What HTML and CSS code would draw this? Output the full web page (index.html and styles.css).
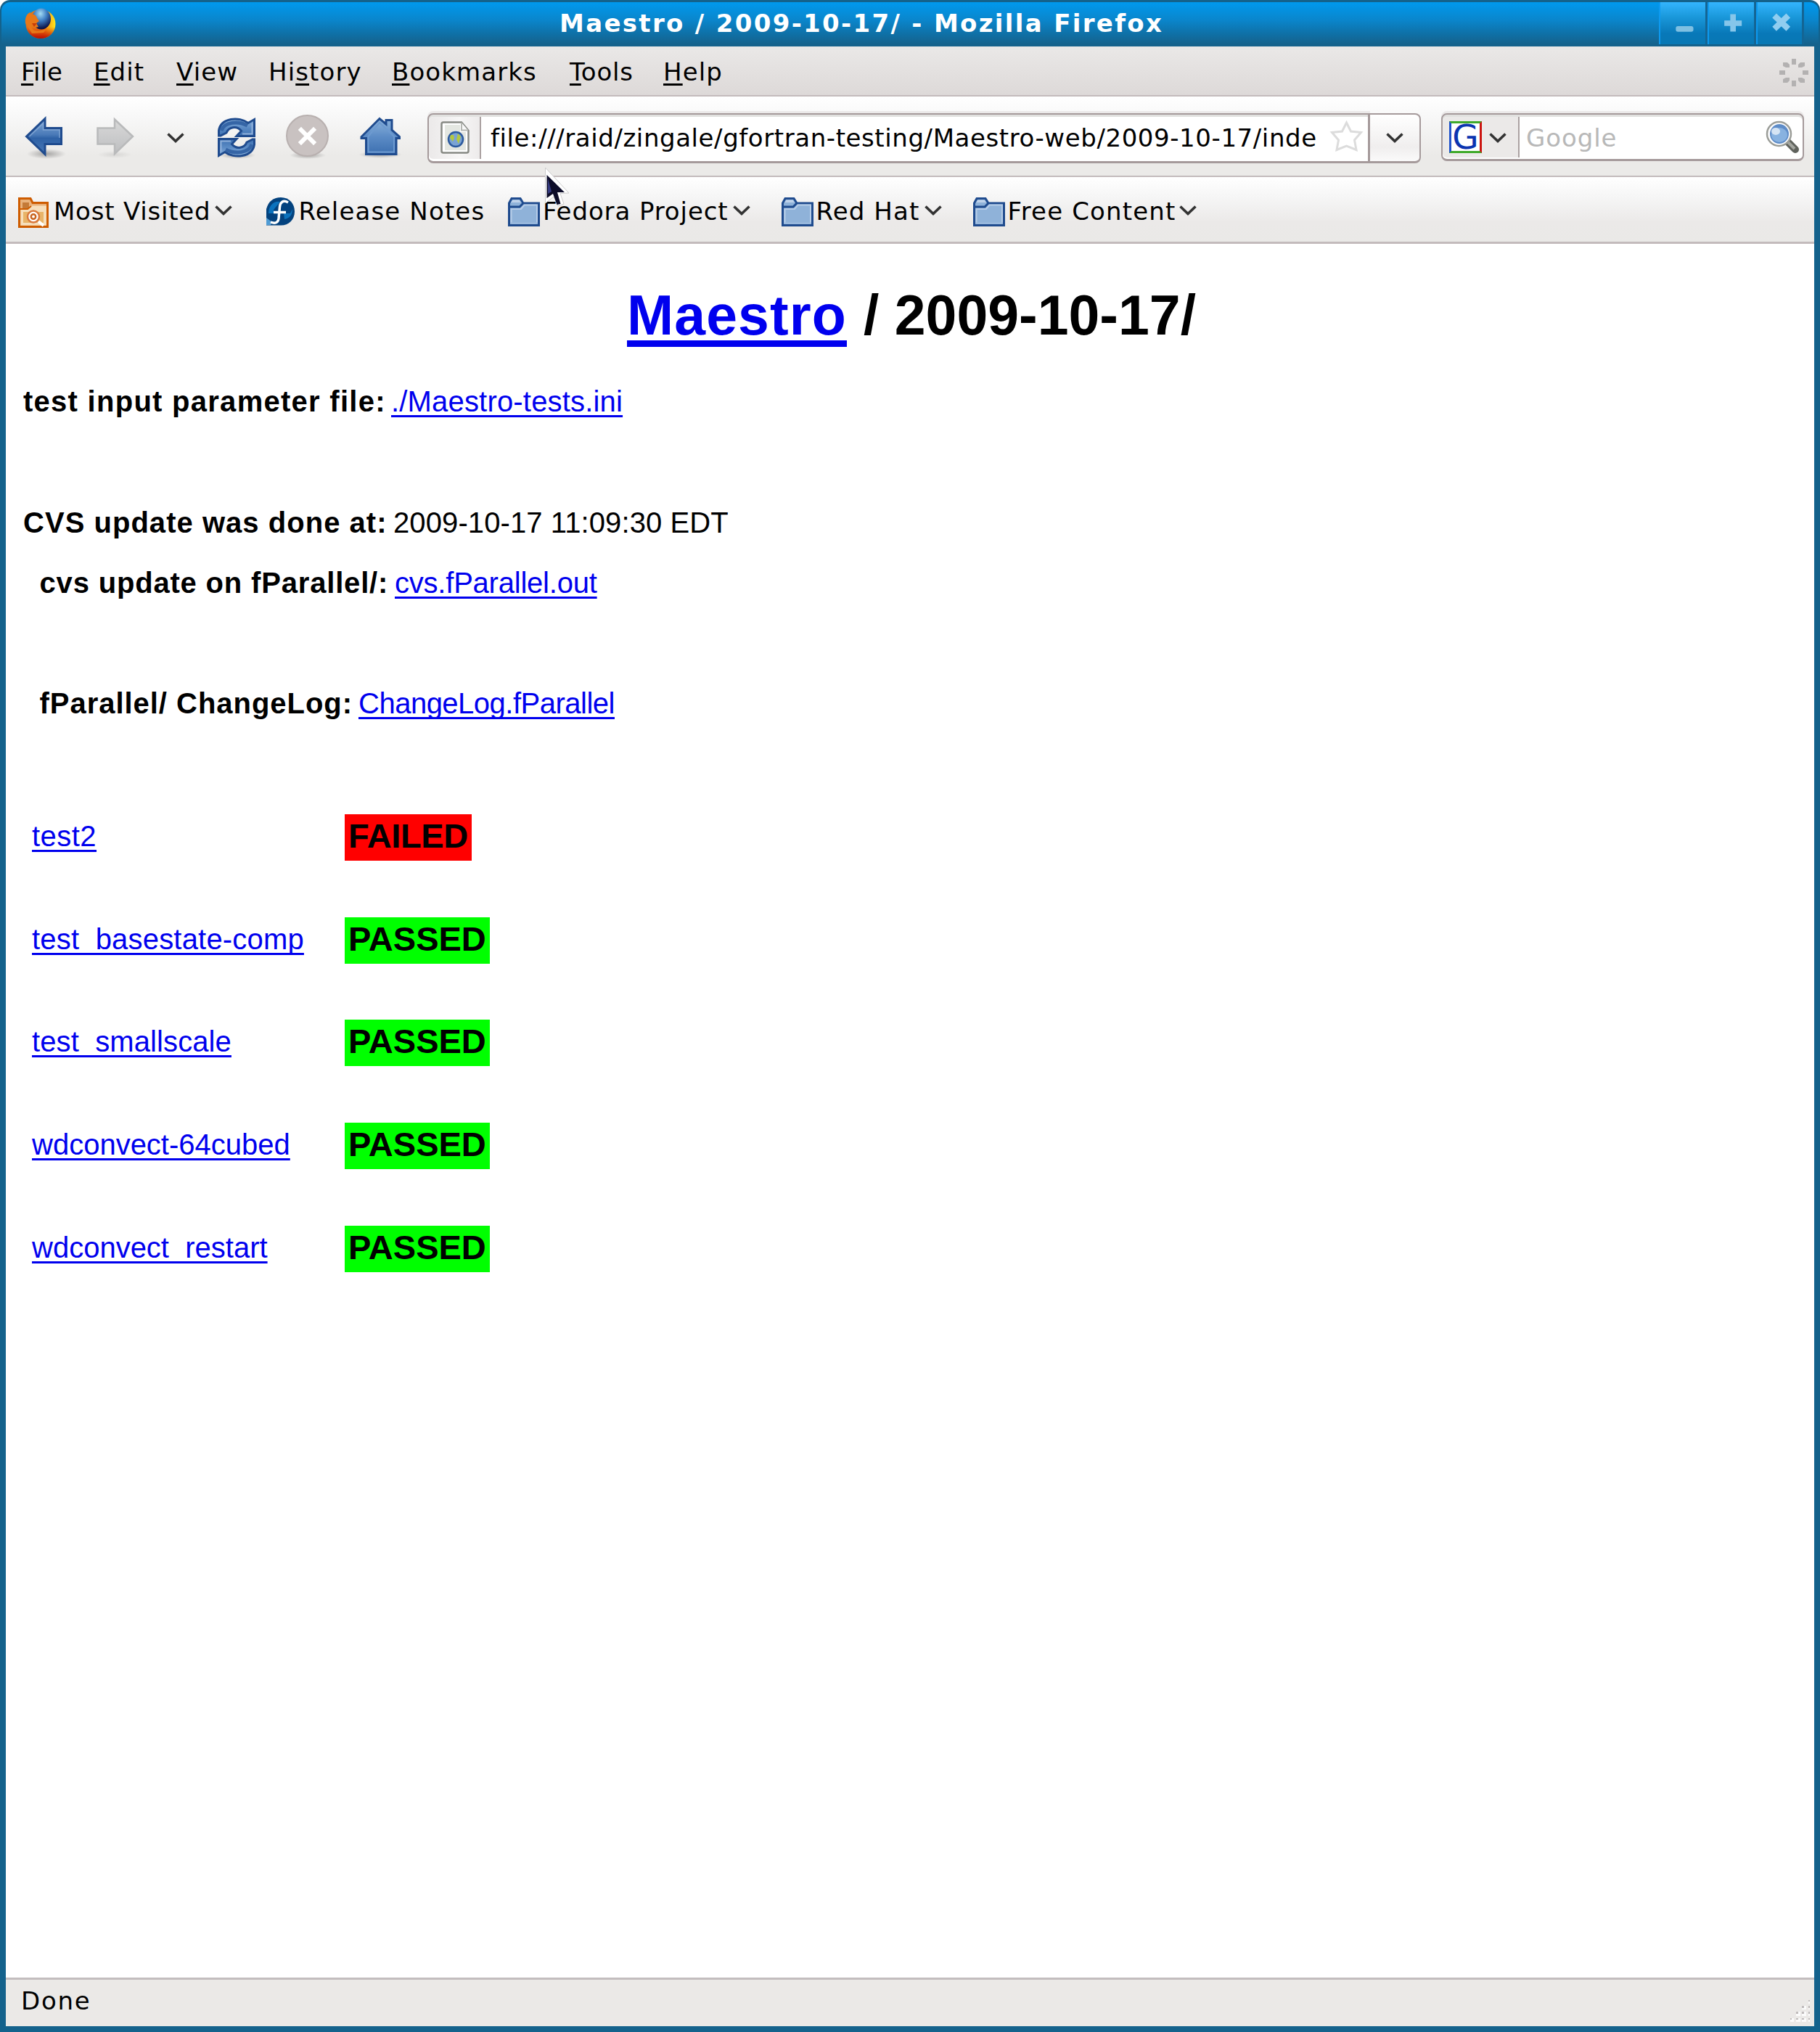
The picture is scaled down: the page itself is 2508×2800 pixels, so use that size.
FILE: index.html
```html
<!DOCTYPE html>
<html lang="en">
<head>
<meta charset="utf-8">
<title>Maestro / 2009-10-17/</title>
<link rel="stylesheet" href="styles.css">
</head>
<body>
<svg class="defs" width="0" height="0" aria-hidden="true">
  <defs>
    <linearGradient id="blue" x1="0" y1="0" x2="0" y2="1"><stop offset="0" stop-color="#8db4dc"/><stop offset=".5" stop-color="#5c8cc6"/><stop offset="1" stop-color="#3c6fb0"/></linearGradient>
    <linearGradient id="arrow" x1="0" y1="0" x2="0" y2="1"><stop offset="0" stop-color="#7ea6d4"/><stop offset=".45" stop-color="#4a7ab8"/><stop offset=".55" stop-color="#2f62a6"/><stop offset="1" stop-color="#4a78b6"/></linearGradient>
    <linearGradient id="grey" x1="0" y1="0" x2="0" y2="1"><stop offset="0" stop-color="#d9d9d9"/><stop offset="1" stop-color="#bdbec0"/></linearGradient>
    <radialGradient id="shadow"><stop offset="0" stop-color="#000" stop-opacity=".3"/><stop offset="1" stop-color="#000" stop-opacity="0"/></radialGradient>
    <radialGradient id="globe" cx=".45" cy=".25" r=".75"><stop offset="0" stop-color="#a4dcf4"/><stop offset=".45" stop-color="#3f7fc4"/><stop offset="1" stop-color="#05083c"/></radialGradient>
    <linearGradient id="fox" x1="0" y1="0" x2="1" y2="0"><stop offset="0" stop-color="#e0701a"/><stop offset=".6" stop-color="#f08010"/><stop offset="1" stop-color="#ffe81c"/></linearGradient>
    <linearGradient id="foxbase" x1="0" y1="0" x2="0" y2="1"><stop offset=".6" stop-color="#d01000" stop-opacity="0"/><stop offset="1" stop-color="#b80c00"/></linearGradient>
    <symbol id="folder" viewBox="0 0 44 40">
      <path d="M1.500 38.500V8L5 1.500H17L21 8H42.500V38.500Z" fill="#8fb2d9" stroke="#1f4b8e" stroke-width="3"/>
      <path d="M4 7 6.500 3.500H15.500L18 7Z" fill="#bfd2ea"/>
      <path d="M2 13H16L20.500 8.500" fill="none" stroke="#1f4b8e" stroke-width="3"/>
      <path d="M4.500 36V16H18L22.500 10.500H40V36" fill="none" stroke="#b7cde8" stroke-width="2"/>
      <path d="M3 35.500H41" stroke="#9bbade" stroke-width="2"/>
    </symbol>
    <symbol id="chev" viewBox="0 0 24 15"><path d="M1.500 1.500 12 11.500 22.500 1.500" fill="none" stroke="#333" stroke-width="3.600"/></symbol>
  </defs>
</svg>

<div class="window">
  <header class="titlebar">
    <svg class="app-icon" viewBox="33 10 44 44">
      <ellipse cx="56" cy="33" rx="20.500" ry="20" fill="url(#fox)"/>
      <ellipse cx="56" cy="33" rx="20.500" ry="20" fill="url(#foxbase)"/>
      <ellipse cx="57" cy="26" rx="13" ry="14.500" fill="url(#globe)"/>
      <path d="M35 32C34 23 38 18 42 17L43 20C47 19 50 21 51 25L54 29 50 32 53 37C48 39 44 36 43 33L44 39C48 45 58 43 65 39L60 45 44 46Z" fill="#e87818"/>
      <path d="M44 32 51 32 47 37Z" fill="#c83c08"/>
    </svg>
    <div class="caption"><span class="t ls-title">Maestro / 2009-10-17/ - Mozilla Firefox</span></div>
    <div class="controls">
      <svg viewBox="2286 3 64 58"><rect x="2308" y="36" width="25" height="8" rx="3" fill="#7fc0e2"/></svg>
      <svg viewBox="2353 3 64 58"><path d="M2387.500 19V44M2375 32H2400" stroke="#86c6ea" stroke-width="8"/></svg>
      <svg viewBox="2419 3 64 58"><path d="M2443 21 2463 40M2463 21 2443 40" stroke="#90cdf0" stroke-width="8.500"/></svg>
    </div>
  </header>

  <nav class="menubar">
    <span class="t ls-m1"><u>F</u>ile</span>
    <span class="t ls-m"><u>E</u>dit</span>
    <span class="t ls-m"><u>V</u>iew</span>
    <span class="t ls-m">Hi<u>s</u>tory</span>
    <span class="t ls-m"><u>B</u>ookmarks</span>
    <span class="t ls-m6"><u>T</u>ools</span>
    <span class="t ls-m"><u>H</u>elp</span>
    <svg class="throbber" viewBox="0 0 40 38" fill="#b3b1b1">
      <path d="M17 0h6v8h-6zM17 30h6v8h-6zM0 16h8v6H0zM32 16h8v6h-8zM5 5h6l3 3v4H9L5 10zM35 5h-6l-3 3v4h5l4-2zM5 33h6l3-3v-4H9l-4 2zM35 33h-6l-3-3v-4h5l4 2z"/>
    </svg>
  </nav>

  <div class="navbar">
    <svg class="tool back" viewBox="30 156 62 63">
      <ellipse cx="64" cy="212" rx="27" ry="7" fill="url(#shadow)"/>
      <path d="M36.500 188 62 163.500V176.500H84.500V198.500H62V212.500Z" fill="url(#arrow)" stroke="#1f4b8e" stroke-width="3"/>
      <path d="M40.500 188 59.500 170V179H82V190" fill="none" stroke="#90b1da" stroke-width="1.500" opacity=".7"/>
    </svg>
    <svg class="tool forward" viewBox="130 156 58 63">
      <ellipse cx="158" cy="213" rx="24" ry="5" fill="url(#shadow)" opacity=".3"/>
      <path d="M183 188 158 164.500V176.500H134.500V198.500H158V212Z" fill="url(#grey)" stroke="#b9babb" stroke-width="2.500"/>
    </svg>
    <svg class="small-chev" viewBox="0 0 24 15"><use href="#chev"/></svg>
    <svg class="tool reload" viewBox="298 156 56 63">
      <ellipse cx="327" cy="214" rx="25" ry="5" fill="url(#shadow)"/>
      <g id="half"><path d="M301.500 187V180C304 162 330 160 342 169.500L350.500 164.500V187.500H326L332.500 180.500C326 172.500 315 175 312 183L304 187Z" fill="url(#blue)" stroke="#1f4b8e" stroke-width="3"/>
      <path d="M305 180C309 168 328 166 341 173" fill="none" stroke="#3565a6" stroke-width="5"/><path d="M347.500 170V184.500H334" fill="none" stroke="#8fb0da" stroke-width="2"/></g>
      <use href="#half" transform="rotate(180 326 189.500)"/>
    </svg>
    <svg class="tool stop" viewBox="392 156 63 63">
      <ellipse cx="424" cy="214" rx="25" ry="5" fill="url(#shadow)"/>
      <ellipse cx="423.500" cy="187" rx="28.500" ry="28" fill="#c9c2c1" stroke="#b8b0af" stroke-width="2"/>
      <path d="M415 179 432 196M432 179 415 196" stroke="#fff" stroke-width="6" stroke-linecap="square"/>
    </svg>
    <svg class="tool home" viewBox="493 156 63 63">
      <ellipse cx="524" cy="213" rx="30" ry="5" fill="url(#shadow)"/>
      <path d="M504.500 212.500V190.500H498V188.500L523 163.500 532 171V165.500H540V179L550.500 188.500V190.500H546V212.500Z" fill="url(#blue)" stroke="#1f4b8e" stroke-width="3"/>
      <path d="M507.500 209.500V188L523 169 543 188V209.500Z" fill="none" stroke="#6d9ad0" stroke-width="2"/>
    </svg>

    <div class="urlbox">
      <div class="identity">
        <svg width="40" height="45" viewBox="607 167 40 45">
          <path d="M611 168.500H636L645.500 180V208Q645.500 210.500 643 210.500H611Q608.500 210.500 608.500 208V171Q608.500 168.500 611 168.500Z" fill="#fff" stroke="#888a85" stroke-width="2.500"/>
          <path d="M613 172H634V182H642V207H613Z" fill="#e4e7e1"/><path d="M636 169V179.500H645" fill="#f8f8f8" stroke="#b5b7b2" stroke-width="2"/>
          <ellipse cx="628" cy="192" rx="10" ry="10" fill="#7aa3d4" stroke="#2c5a9e" stroke-width="2.500"/>
          <path d="M621 186 625 186 626 190 624 195 620 190ZM631 184 635 188 632 198 629 192Z" fill="#b4c840"/>
        </svg>
      </div>
      <div class="url"><span class="t ls-url">file:///raid/zingale/gfortran-testing/Maestro-web/2009-10-17/inde</span></div>
      <svg class="star" viewBox="1832 166 47 44"><path d="M1855.500 169 1861.500 181 1875.500 182.500 1866.500 193 1869 206.500 1855.500 201 1842 206.500 1844.500 193 1835.500 182.500 1849.500 181Z" fill="#fff" stroke="#dcdcdc" stroke-width="3"/></svg>
    </div>
    <div class="drop"><svg width="24" height="15" viewBox="0 0 24 15"><use href="#chev"/></svg></div>

    <div class="search">
      <div class="engine">
        <span class="glogo"><span>G</span></span>
        <svg width="24" height="15" viewBox="0 0 24 15"><use href="#chev"/></svg>
      </div>
      <div class="query"><span class="t ls-google">Google</span></div>
      <svg class="lens" viewBox="2432 166 48 46">
        <path d="M2463 195 2474 206" stroke="#5f625c" stroke-width="10" stroke-linecap="round"/>
        <path d="M2464 196 2473 205" stroke="#a3a59f" stroke-width="4"/>
        <ellipse cx="2451.500" cy="184.500" rx="16.500" ry="16.500" fill="#fff" stroke="#9b9d98" stroke-width="2.500"/>
        <ellipse cx="2452" cy="184.500" rx="13" ry="13.500" fill="#5e8cc8"/>
        <ellipse cx="2452" cy="186" rx="11" ry="10" fill="#88b2e0"/>
        <ellipse cx="2447" cy="181" rx="6" ry="5" fill="#d5e4f4"/>
      </svg>
    </div>
  </div>

  <div class="bookmarks">
    <svg class="bm-icon most" viewBox="0 0 42 42">
      <path d="M1.500 40.500V1.500H17L20 7.500H40.500V40.500Z" fill="#e9b27c" stroke="#ce5c00" stroke-width="3"/>
      <path d="M6 7H15V15H6Z" fill="#c47a38"/>
      <path d="M3.500 17H14L19 11.500H39V38.500H3.500Z" fill="#f6dfbc"/><path d="M2 16H13L18 12" fill="none" stroke="#ce5c00" stroke-width="2"/>
      <path d="M7 20H35V35H7Z" fill="#e8b468"/>
      <circle cx="21" cy="26.500" r="8" fill="#fff" stroke="#d9783c" stroke-width="2.500"/><circle cx="21" cy="26.500" r="3.200" fill="none" stroke="#c96420" stroke-width="2.500"/><path d="M28 33 35 39" stroke="#fff" stroke-width="4"/>
    </svg>
    <span class="t b1">Most Visited</span><svg class="bm-chev" viewBox="0 0 24 15"><use href="#chev"/></svg>
    <svg class="bm-icon fedora" viewBox="0 0 39 39">
      <path d="M0 38.500V16C3 5 10 0 20 0 32 0 39 9 39 19.500 39 31 31 38.500 20 38.500Z" fill="#03427e"/>
      <path d="M19 6C10 4 3 12 3 22H10V17ZM36 16C36 24 32 29 25 30L24 22H33Z" fill="#0b72bd"/><path d="M0 38V28L8 34 6 38Z" fill="#4f9bd4"/>
      <path d="M30 7C23 3 19 7 18.500 13L17 29C16 36 11 36 6 34M10 20.500H27" fill="none" stroke="#fff" stroke-width="3.500"/>
    </svg>
    <span class="t b2">Release Notes</span>
    <svg class="bm-icon f1" viewBox="0 0 44 40"><use href="#folder"/></svg>
    <span class="t b3">Fedora Project</span><svg class="bm-chev" viewBox="0 0 24 15"><use href="#chev"/></svg>
    <svg class="bm-icon f2" viewBox="0 0 44 40"><use href="#folder"/></svg>
    <span class="t b4">Red Hat</span><svg class="bm-chev" viewBox="0 0 24 15"><use href="#chev"/></svg>
    <svg class="bm-icon f3" viewBox="0 0 44 40"><use href="#folder"/></svg>
    <span class="t b5">Free Content</span><svg class="bm-chev" viewBox="0 0 24 15"><use href="#chev"/></svg>
  </div>

  <main class="page">
    <h1><a class="t" href="#">Maestro</a><span class="t">/ 2009-10-17/</span></h1>
    <p><b class="t ls-p1">test input parameter file:</b><a class="t ls-l1" href="#">./Maestro-tests.ini</a></p>
    <p class="after-gap"><b class="t ls-p2">CVS update was done at:</b><span class="t ls-l2">2009-10-17 11:09:30 EDT</span></p>
    <p class="indent"><b class="t ls-p3">cvs update on fParallel/:</b><a class="t ls-l3" href="#">cvs.fParallel.out</a></p>
    <p class="indent after-gap"><b class="t ls-p4">fParallel/ ChangeLog:</b><a class="t ls-l4" href="#">ChangeLog.fParallel</a></p>
    <div class="results">
      <a class="t ls-t1" href="#">test2</a><span class="badge failed">FAILED</span>
      <a class="t ls-t2" href="#">test_basestate-comp</a><span class="badge">PASSED</span>
      <a class="t ls-t3" href="#">test_smallscale</a><span class="badge">PASSED</span>
      <a class="t" href="#">wdconvect-64cubed</a><span class="badge">PASSED</span>
      <a class="t" href="#">wdconvect_restart</a><span class="badge">PASSED</span>
    </div>
  </main>

  <footer class="status">
    <span class="t ls-done">Done</span>
    <svg class="grip" viewBox="2467 2756 27 30">
      <path d="M2492 2756h2v5h-2zM2483 2764h6v5h-6zM2492 2764h2v5h-2zM2475 2772h6v6h-6zM2483 2772h6v6h-6zM2492 2772h2v6h-2zM2467 2781h5v5h-5zM2475 2781h6v5h-6zM2483 2781h6v5h-6zM2492 2781h2v5h-2z" fill="#fbfbfb"/>
      <path d="M2492 2756h2v2h-2zM2483 2764h3v3h-3zM2492 2764h2v3h-2zM2475 2772h3v3h-3zM2483 2772h3v3h-3zM2492 2772h2v3h-2zM2467 2781h2v2h-2zM2475 2781h3v2h-3zM2483 2781h3v2h-3zM2492 2781h2v2h-2z" fill="#c0bcbc"/>
    </svg>
  </footer>
</div>
<svg class="cursor" viewBox="750 230 36 56">
  <path d="M751.500 231 784 266 772 266.500 777 281 769 284 763 271 751.500 280Z" fill="#fff" stroke="#ccc" stroke-width="1"/>
  <path d="M753.500 241 778 265H768L772.500 281 767.500 282 762 267 753.500 273Z" fill="#0c0c28"/><path d="M755 246 760 264 755 267Z" fill="#343a80"/>
</svg>
</body>
</html>
```
FILE: styles.css
```css
* { box-sizing: border-box; }
body { margin: 0; background: #fff; position: relative; }
svg { display: block; flex: none; }
.defs { position: absolute; }
.t { white-space: nowrap; display: block; }

.window {
  width: 2508px; height: 2800px; display: flex; flex-direction: column;
  background: #14628c; border-radius: 14px 14px 0 0; padding: 3px 8px 8px;
  font: 34px/40px "DejaVu Sans", sans-serif; color: #000; overflow: hidden;
}

/* title bar */
.titlebar {
  height: 61px; margin: 0 -6px; display: flex; flex: none; align-items: flex-start;
  background: linear-gradient(#0099ee, #0a86cc 40%, #0f70a6 72%, #15628c 95%);
  border-radius: 12px 12px 0 0;
}
.app-icon { width: 44px; height: 44px; margin: 7px 0 0 31px; }
.caption { flex: 1; padding: 9px 0 0 694px; font-weight: bold; color: #fff; }
.ls-title { letter-spacing: 2.320px; }
.controls { display: flex; gap: 3px; margin-right: 20px; background: #146594; padding-right: 3px; }
.controls svg { width: 64px; height: 58px; background: linear-gradient(#33b5ff, #1a98da 35%, #0878b8 75%, #0878b4); border-left: 2px solid #0d9af0; }
.controls svg + svg { width: 63.500px; }

/* menu */
.menubar {
  height: 69px; flex: none; display: grid; grid-template-columns: 100px 114px 127px 170px 245px 129px 1fr 48px;
  padding: 15px 0 0 21px; background: linear-gradient(#eae8e7, #ddd9d8); border-bottom: 2px solid #c3bbbc;
}
.menubar u { text-decoration: underline; text-decoration-thickness: 3px; text-underline-offset: 3.500px; text-decoration-skip-ink: none; }
.ls-m { letter-spacing: 1.100px; }
.ls-m1 { letter-spacing: 0; }
.ls-m6 { letter-spacing: 0.800px; }
.throbber { width: 40px; height: 38px; margin-top: 2px; }

/* navigation */
.navbar {
  height: 111px; flex: none; display: flex; align-items: center; padding-left: 22px;
  background: linear-gradient(#fff, #f8f8f8 25%, #ebeae8 75%); border-bottom: 2px solid #c3bbbc;
}
.tool { height: 63px; }
.back { width: 62px; }
.forward { width: 58px; margin-left: 38px; }
.small-chev { width: 24px; height: 15px; margin: 5px 0 0 42px; }
.reload { width: 56px; margin-left: 44px; }
.stop { width: 63px; margin-left: 38px; }
.home { width: 63px; margin-left: 38px; }
.urlbox {
  width: 1299px; height: 69px; margin: 6px 0 0 33px; display: flex; background: #fff;
  border: 2.500px solid #a59a9b; border-right-width: 3px; border-radius: 8px 0 0 8px; border-bottom-width: 3px;
  box-shadow: inset 0 3px #e1e1df, 0 -3px #ebe9e9;
}
.identity { width: 72px; border-right: 2.500px solid #aaa1a1; margin: 3px 0; padding: 6px 0 0 16px; background: linear-gradient(90deg, #ebe9e9, #f7f6f6 60%, #edebeb); border-radius: 6px 0 0 6px; }
.url { flex: 1; padding: 12px 0 0 13px; letter-spacing: 0.580px; }
.star { width: 47px; height: 44px; margin: 8px 6px 0 0; }
.drop { width: 70px; height: 69px; margin-top: 6px; border: 2.500px solid #a59a9b; border-left: 0; border-bottom-width: 3px; border-radius: 0 8px 8px 0; padding: 25px 0 0 22px; background: linear-gradient(#fff, #f0eeee 70%, #fafafa); }
.search {
  width: 500px; height: 66px; margin: 3px 0 0 28px; display: flex; background: #fff;
  border: 2.500px solid #a59a9b; border-bottom-width: 3px; border-radius: 8px; box-shadow: inset 0 3px #e1e1df, 0 -3px #ebe9e9;
}
.engine { width: 106px; margin: 3px 0 2px; border-right: 2px solid #aaa1a1; background: #ebe9e8; display: flex; gap: 10px; padding: 6px 0 0 9px; border-radius: 6px 0 0 6px; }
.engine svg { margin-top: 16px; }
.glogo { width: 45px; height: 44px; background: #fff; border: 3px solid; border-color: #3faa2a #cc1410 #3faa2a #2254cc; font: 47px/38px "DejaVu Sans", sans-serif; color: #0b34b0; display: flex; justify-content: center; }
.query { flex: 1; color: #b8b8b8; padding: 12px 0 0 9px; letter-spacing: 0.900px; }
.lens { width: 48px; height: 46px; margin: 8px 4px 0 0; }

/* bookmarks */
.bookmarks {
  height: 92px; flex: none; display: flex; align-items: flex-start; padding: 26px 0 0 17px;
  background: linear-gradient(#fff, #f6f6f6 30%, #ebe9e8 70%, #eae9e7); border-bottom: 3px solid #c3bbbc;
}
.bookmarks .t { margin-top: 1px; }
.bm-icon { width: 44px; height: 40px; margin-top: 2px; }
.most { width: 42px; height: 42px; }
.fedora { width: 39px; height: 39px; margin-left: 47px; }
.bm-chev { width: 24px; height: 15px; margin-top: 13px; }
.b1 { width: 221.500px; margin-left: 7px; letter-spacing: 0.780px; }
.b2 { width: 288px; margin-left: 6px; letter-spacing: 1.150px; }
.b3 { width: 261.500px; margin-left: 4.500px; letter-spacing: 0.900px; }
.b4 { width: 149.500px; margin-left: 4px; letter-spacing: 1.100px; }
.b5 { width: 236.500px; margin-left: 3.500px; letter-spacing: 1.150px; }
.f2, .f3 { margin-left: 43px; }

/* document */
.page { flex: 1; min-height: 0; background: #fff; font: 40px/48px "Liberation Sans", Arial, sans-serif; overflow: hidden; }
.page a { color: #0000ee; text-decoration: underline; text-decoration-thickness: 3px; text-underline-offset: 5px; text-decoration-skip-ink: none; }
.page h1 { display: flex; gap: 23px; margin: 0; padding: 53px 0 0 856px; font: bold 77px/90px "Liberation Sans", Arial, sans-serif; }
.page h1 a { width: 303px; text-decoration-thickness: 9px; text-underline-offset: 7.500px; letter-spacing: 1.100px; }
.page p { display: flex; margin: 0; padding-left: 24px; height: 83.300px; }
.page h1 + p { margin-top: 50px; }
.page .after-gap { margin-top: 83.300px; }
.page .indent { padding-left: 46.500px; }
.page p b { flex: none; }
.ls-p1 { width: 507px; letter-spacing: 1.270px; }
.ls-p2 { width: 510px; letter-spacing: 1.030px; }
.ls-p3 { width: 489.500px; letter-spacing: 0.820px; }
.ls-p4 { width: 439.500px; letter-spacing: 0.970px; }
.ls-l1 { letter-spacing: 0.180px; }
.ls-l2 { letter-spacing: 0.100px; }
.ls-l3 { letter-spacing: -0.220px; }
.ls-l4 { letter-spacing: -0.500px; }
.ls-t1 { letter-spacing: 0.460px; }
.ls-t2 { letter-spacing: 0.190px; }
.ls-t3 { letter-spacing: 0.100px; }
.results { display: grid; grid-template-columns: 431px max-content; grid-auto-rows: 64px; row-gap: 77.750px; padding-left: 36px; margin-top: 93.200px; justify-items: start; }
.results a { margin-top: 6px; }
.badge { background: #00ff00; font-weight: bold; font-size: 47px; line-height: 60px; height: 64px; width: 200px; padding-left: 5px; }
.failed { background: #ff0000; width: 175px; letter-spacing: -0.400px; }

.status { height: 67px; flex: none; border-top: 3px solid #c3bdbe; background: #ebe9e7; display: flex; justify-content: space-between; padding: 9px 6px 0 21px; }
.ls-done { letter-spacing: 1.700px; }
.grip { width: 27px; height: 30px; margin-top: 19px; }
.cursor { position: absolute; left: 750px; top: 230px; width: 36px; height: 56px; }
```
